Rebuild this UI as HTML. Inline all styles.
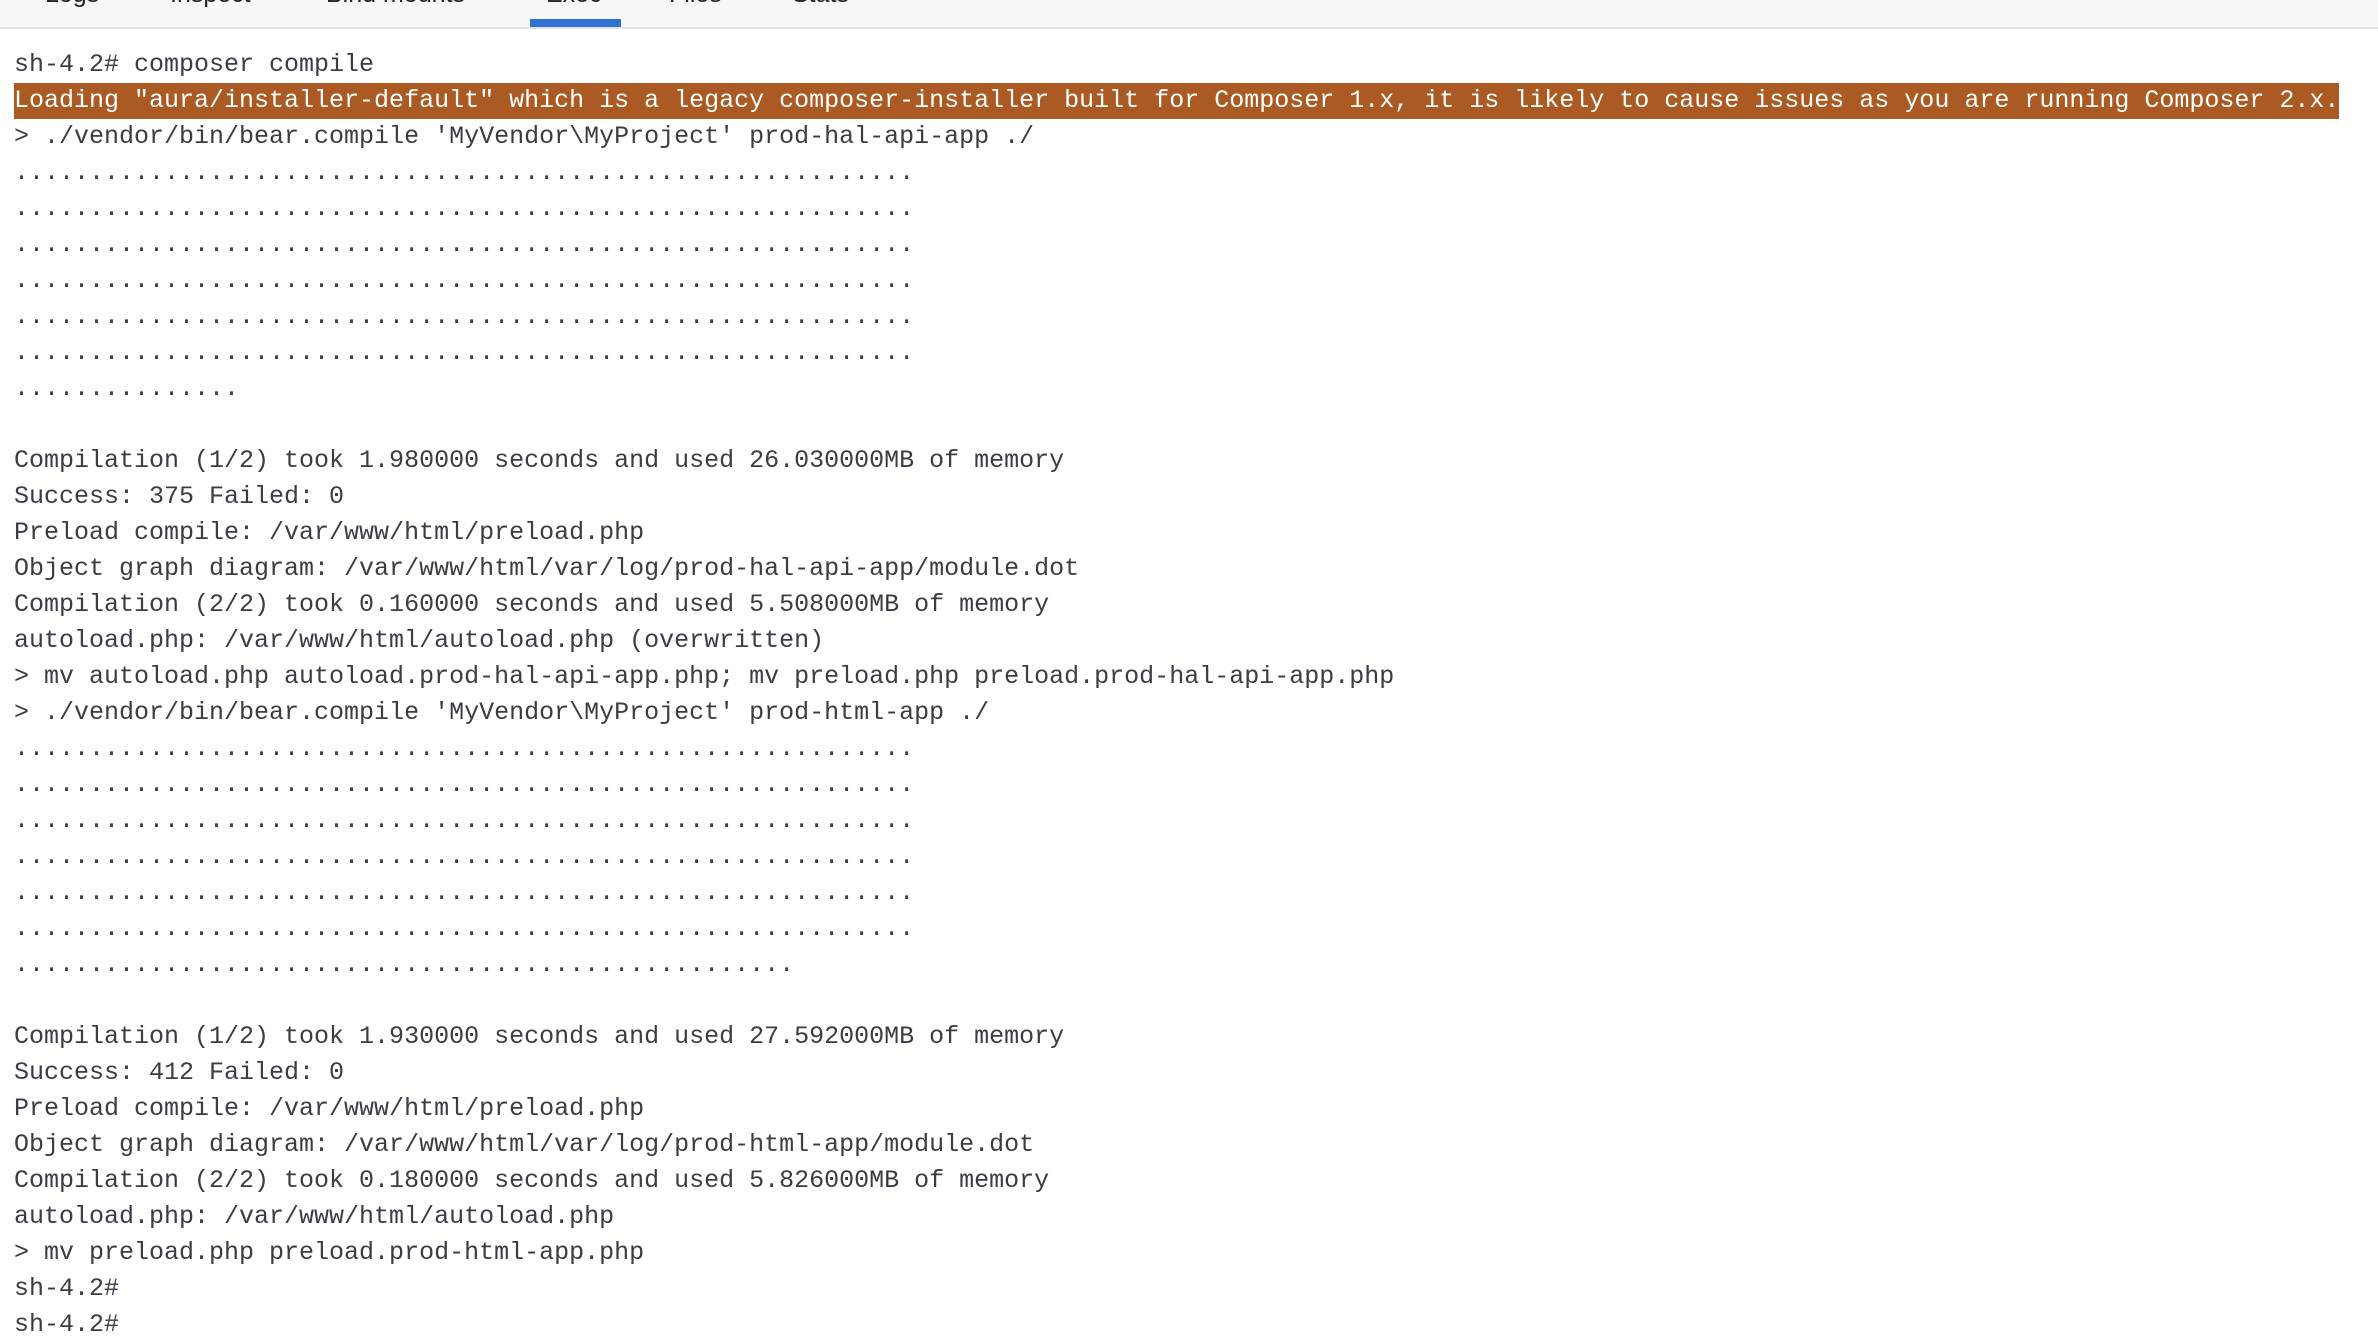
<!DOCTYPE html>
<html><head><meta charset="utf-8"><style>
html,body{margin:0;padding:0;background:#fff;width:2378px;height:1338px;overflow:hidden}
.bar{position:absolute;left:0;top:0;width:2378px;height:27px;background:#f7f7f8;border-bottom:2px solid #e1e1e6}
.tab{position:absolute;top:-18px;font:25px/25px "Liberation Sans",sans-serif;color:#222;white-space:nowrap}
.ul{position:absolute;left:530px;top:19px;width:91px;height:8px;background:#3070d0}
.term{position:absolute;left:14px;top:47px;font-family:"Liberation Mono","DejaVu Sans Mono",monospace;font-size:25px;letter-spacing:0px;line-height:36px;color:#3a3c46}
.term div{height:36px;white-space:pre}
.hl{background:#aa5a22;color:#fff;display:inline-block;width:2325px;height:36px}
</style></head><body>
<div class="bar">
<span class="tab" style="left:45px">Logs</span>
<span class="tab" style="left:170px">Inspect</span>
<span class="tab" style="left:326px">Bind mounts</span>
<span class="tab" style="left:546px">Exec</span>
<span class="tab" style="left:669px">Files</span>
<span class="tab" style="left:792px">Stats</span>
<div class="ul"></div>
</div>
<div class="term"><div>sh-4.2# composer compile</div><div><span class="hl">Loading "aura/installer-default" which is a legacy composer-installer built for Composer 1.x, it is likely to cause issues as you are running Composer 2.x.</span></div><div>&gt; ./vendor/bin/bear.compile 'MyVendor\MyProject' prod-hal-api-app ./</div><div>............................................................</div><div>............................................................</div><div>............................................................</div><div>............................................................</div><div>............................................................</div><div>............................................................</div><div>...............</div><div></div><div>Compilation (1/2) took 1.980000 seconds and used 26.030000MB of memory</div><div>Success: 375 Failed: 0</div><div>Preload compile: /var/www/html/preload.php</div><div>Object graph diagram: /var/www/html/var/log/prod-hal-api-app/module.dot</div><div>Compilation (2/2) took 0.160000 seconds and used 5.508000MB of memory</div><div>autoload.php: /var/www/html/autoload.php (overwritten)</div><div>&gt; mv autoload.php autoload.prod-hal-api-app.php; mv preload.php preload.prod-hal-api-app.php</div><div>&gt; ./vendor/bin/bear.compile 'MyVendor\MyProject' prod-html-app ./</div><div>............................................................</div><div>............................................................</div><div>............................................................</div><div>............................................................</div><div>............................................................</div><div>............................................................</div><div>....................................................</div><div></div><div>Compilation (1/2) took 1.930000 seconds and used 27.592000MB of memory</div><div>Success: 412 Failed: 0</div><div>Preload compile: /var/www/html/preload.php</div><div>Object graph diagram: /var/www/html/var/log/prod-html-app/module.dot</div><div>Compilation (2/2) took 0.180000 seconds and used 5.826000MB of memory</div><div>autoload.php: /var/www/html/autoload.php</div><div>&gt; mv preload.php preload.prod-html-app.php</div><div>sh-4.2#</div><div>sh-4.2#</div></div>
</body></html>
